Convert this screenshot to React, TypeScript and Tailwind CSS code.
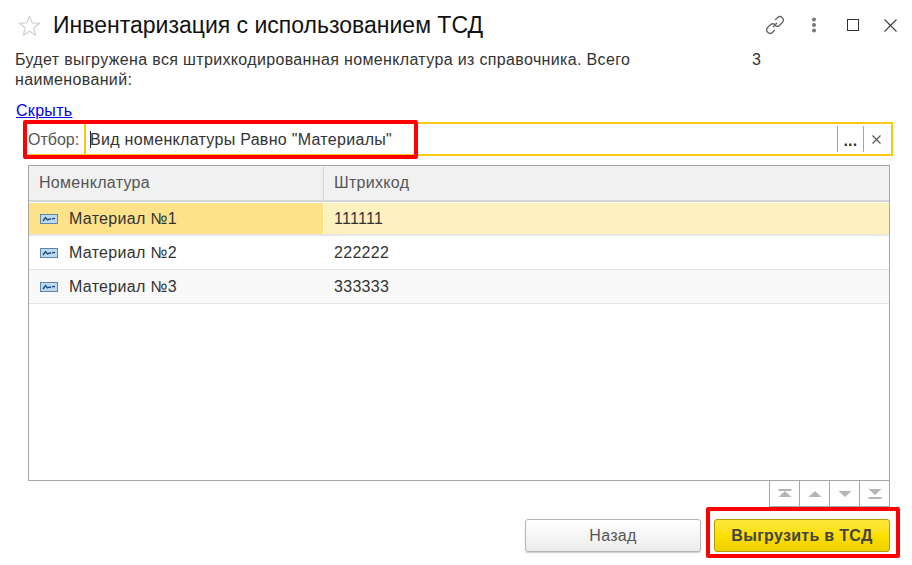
import React from "react";

const F = "font-['Liberation_Sans',Arial,sans-serif]";

function RowIcon() {
  return (
    <svg width="18" height="10" viewBox="0 0 18 10" className="shrink-0">
      <rect x="0.5" y="0.5" width="17" height="9" fill="#bcd8ee" stroke="#5f86ab" />
      <path d="M3 7 L5.5 3.5 L7.5 6 L9.5 5 L11 5.4 M12 4.8 L15 4.4" fill="none" stroke="#0f4582" strokeWidth="1.3" />
    </svg>
  );
}

function Row({ name, code, cls, first, second }: { name: string; code: string; cls: string; first?: string; second?: string }) {
  return (
    <div className={`flex ${cls}`}>
      <div className={`w-[295px] flex items-center pl-[11px] gap-[11px] ${first ?? ""}`}>
        <RowIcon />
        <span>{name}</span>
      </div>
      <div className={`flex-1 flex items-center pl-[10px] ${second ?? ""}`}>{code}</div>
    </div>
  );
}

function PagerBtn({ d, bar, barTop }: { d: string; bar?: boolean; barTop?: boolean }) {
  return (
    <div className="w-[30px] h-full flex items-center justify-center border-l border-[#a6a6a6]">
      <svg width="14" height="10" viewBox="0 0 14 10">
        {bar && <rect x="0.5" y={barTop ? 0 : 8} width="13" height="2" fill="#b5b5b5" />}
        <path d={d} fill="#b5b5b5" />
      </svg>
    </div>
  );
}

export default function App() {
  return (
    <div className={`${F} relative w-[912px] h-[565px] overflow-hidden bg-white text-[#333] text-[16px] leading-[20px] tracking-[0.3px]`}>
      <div className="h-[50px] flex items-center pl-[18px] pr-[15px]">
        <svg width="23" height="23" viewBox="0 0 24 24" className="shrink-0">
          <path d="M12 2 L14.8 9.2 L22.6 9.7 L16.5 14.6 L18.5 22.2 L12 18 L5.5 22.2 L7.5 14.6 L1.4 9.7 L9.2 9.2 Z" fill="#fff" stroke="#cfcfcf" strokeWidth="1.2" strokeLinejoin="round" />
        </svg>
        <h1 className="ml-[12px] text-[23px] leading-[28px] tracking-normal text-[#111] font-normal flex-1">Инвентаризация с использованием ТСД</h1>
        <svg width="20" height="20" viewBox="0 0 20 20" fill="none" stroke="#666" strokeWidth="1.4" strokeLinecap="round" className="mr-[26px]">
          <path d="M8.3 11.7 L11.7 8.3" />
          <path d="M10.6 4.6 L12.6 2.6 a3.4 3.4 0 0 1 4.8 4.8 L14.6 10.2 a3.4 3.4 0 0 1 -4 .6" />
          <path d="M9.4 15.4 L7.4 17.4 a3.4 3.4 0 0 1 -4.8 -4.8 L5.4 9.8 a3.4 3.4 0 0 1 4 -.6" />
        </svg>
        <svg width="6" height="16" viewBox="0 0 6 16" fill="#777" className="mr-[30px]">
          <circle cx="3" cy="2.5" r="2" />
          <circle cx="3" cy="8" r="2" />
          <circle cx="3" cy="13.5" r="2" />
        </svg>
        <div className="w-[12px] h-[12px] border-[1.5px] border-[#333] mr-[25px]" />
        <svg width="13" height="13" viewBox="0 0 13 13" stroke="#444" strokeWidth="1.2">
          <path d="M.5 .5 L12.5 12.5 M12.5 .5 L.5 12.5" />
        </svg>
      </div>

      <div className="flex pl-[15px] h-[40px]">
        <p className="w-[640px] tracking-[0.35px]">Будет выгружена вся штрихкодированная номенклатура из справочника. Всего наименований:</p>
        <span className="ml-[97px]">3</span>
      </div>

      <a className="block ml-[16px] mt-[11px] h-[20px] text-[#0000ee] underline">Скрыть</a>

      <div className="ml-[24px] mt-px w-[869px] h-[34px] flex border-2 border-[#fbc913] items-stretch">
        <div className="w-[60px] flex items-center pl-[2px] pt-[1px] tracking-normal text-[#555] border-r-2 border-[#fbc913]">Отбор:</div>
        <div className="flex-1 flex items-center relative pl-[4px] pt-[1px]">
          <span className="w-px h-[17px] bg-[#222] mr-[-1px]" />
          <span>Вид номенклатуры Равно "Материалы"</span>
        </div>
        <div className="my-[2px] w-[26px] border-l border-[#a6a6a6] flex items-end justify-center pb-[1px] text-[#333] font-bold">...</div>
        <div className="my-[2px] w-[28px] border-l border-[#a6a6a6] flex items-center justify-center pr-[2px]">
          <svg width="9" height="9" viewBox="0 0 9 9" stroke="#555" strokeWidth="1.1">
            <path d="M.5 .5 L8.5 8.5 M8.5 .5 L.5 8.5" />
          </svg>
        </div>
      </div>

      <div className="ml-[28px] mt-[9px] w-[862px] h-[316px] border border-[#a6a6a6] flex flex-col">
        <div className="flex h-[36px] bg-[#f1f1f1] border-b-2 border-[#d6d6d6] text-[#555] shrink-0">
          <div className="w-[295px] flex items-center pl-[10px] border-r border-[#d6d6d6]">Номенклатура</div>
          <div className="flex-1 flex items-center pl-[10px]">Штрихкод</div>
        </div>
        <Row name="Материал №1" code="111111" cls="h-[33px] mt-px border-b-2 border-[#e6e6e6]" first="bg-[#fde28a] border-r border-white" second="bg-[#fdf1c0]" />
        <Row name="Материал №2" code="222222" cls="h-[34px] border-b border-[#e3e3e3]" />
        <Row name="Материал №3" code="333333" cls="h-[34px] border-b border-[#e3e3e3] bg-[#f9f9f9]" />
      </div>

      <div className="ml-[769px] w-[121px] h-[26px] flex border-r border-b border-[#a6a6a6]">
        <PagerBtn d="M7 2 L13.5 8 H0.5 Z" bar barTop />
        <PagerBtn d="M7 2 L13.5 8 H0.5 Z" />
        <PagerBtn d="M0.5 2 H13.5 L7 8 Z" />
        <PagerBtn d="M0.5 0 H13.5 L7 6 Z" bar />
      </div>

      <div className="flex ml-[525px] mt-[12px] gap-[13px]">
        <button className="w-[176px] h-[33px] rounded-[3px] border border-[#b5b5b5] bg-gradient-to-b from-white to-[#ececec] text-[#555] shadow-[0_1px_1px_#ccc]">Назад</button>
        <button className="w-[176px] h-[33px] rounded-[3px] border border-[#b59b00] bg-gradient-to-b from-[#ffe83a] via-[#fddf00] to-[#efcf00] text-[#444] font-bold">Выгрузить в ТСД</button>
      </div>

      <div className="absolute left-[23px] top-[120px] w-[395px] h-[39px] border-4 border-[#ff0000] rounded-[2px] pointer-events-none" />
      <div className="absolute left-[706px] top-[507px] w-[194px] h-[51px] border-4 border-[#ff0000] rounded-[2px] pointer-events-none" />
    </div>
  );
}
